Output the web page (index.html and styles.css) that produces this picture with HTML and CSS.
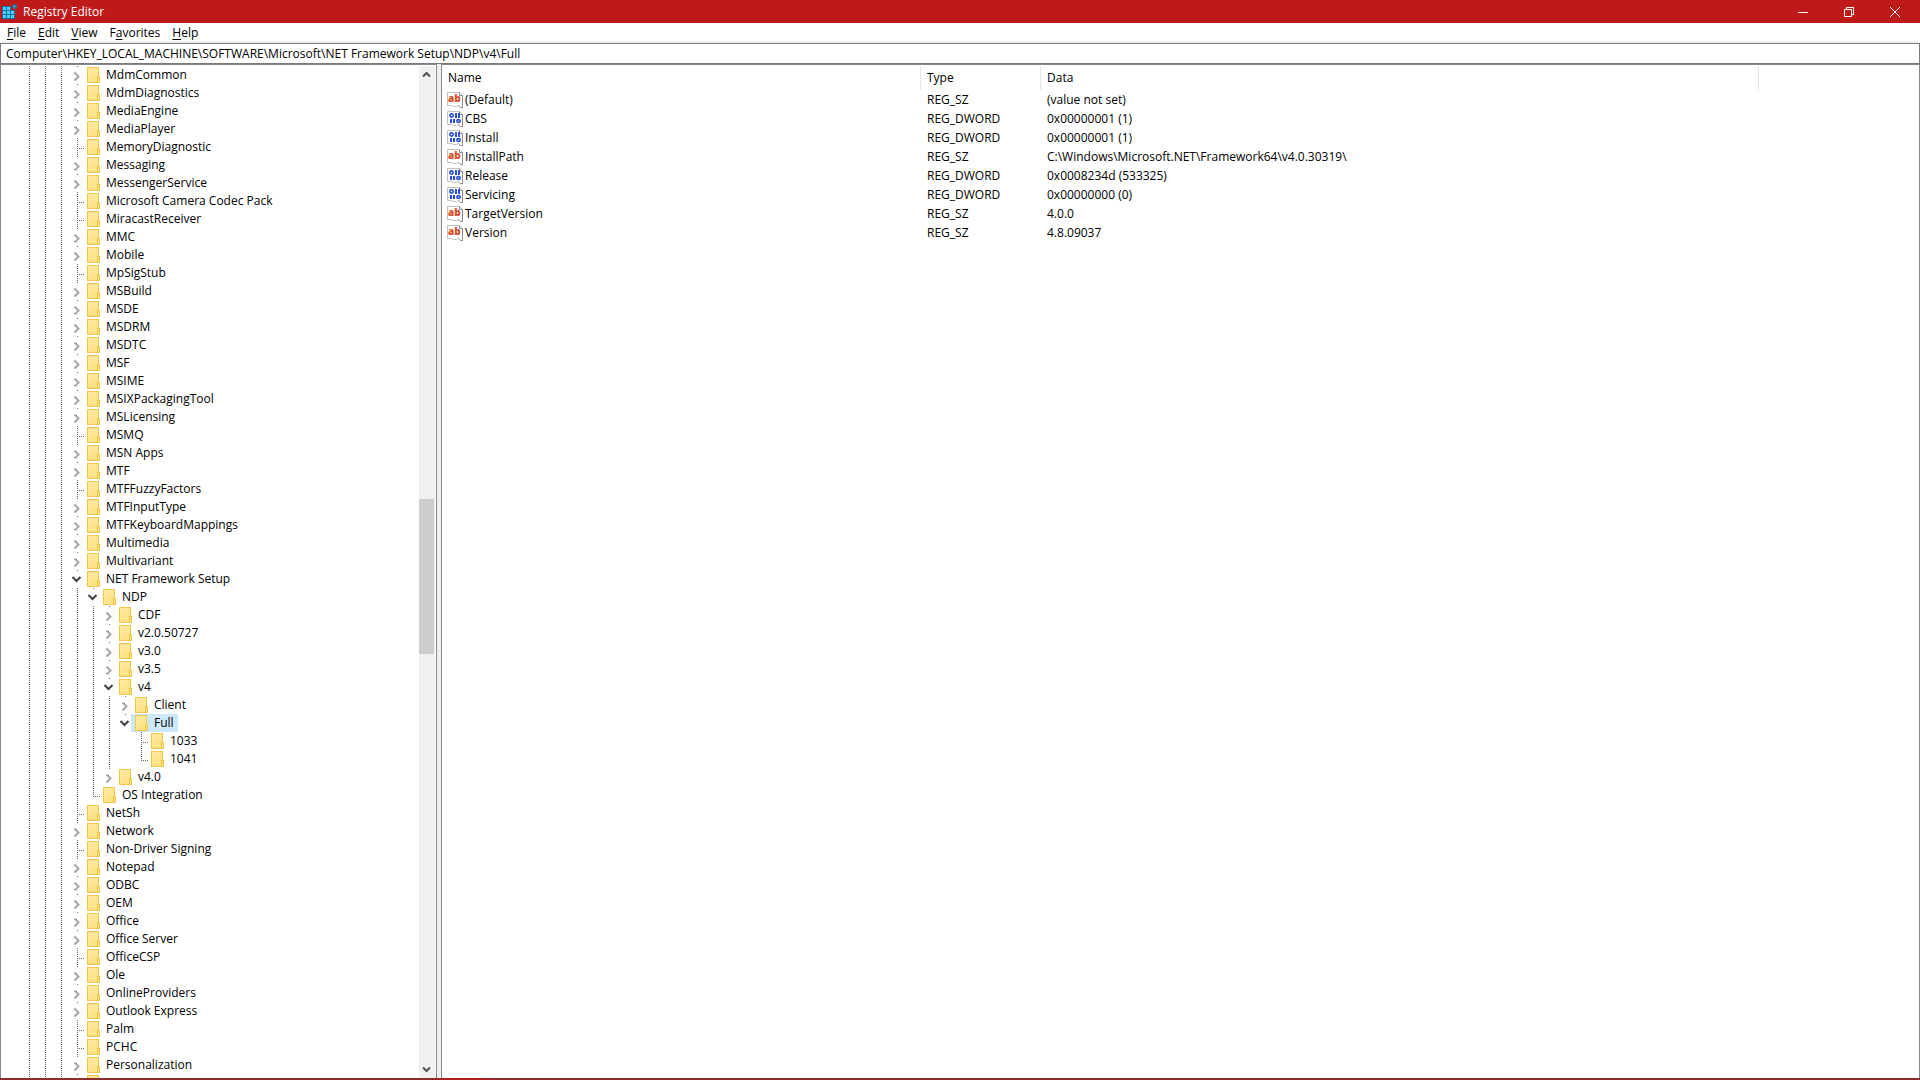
FILE: index.html
```
<!DOCTYPE html>
<html lang="en">

<head>
    <meta charset="utf-8">
    <title>Registry Editor</title>
    <link rel="stylesheet" href="styles.css">
</head>

<body>
<svg class="symbols" aria-hidden="true">
    <symbol id="icon-right" viewBox="0 0 16 17">
        <path d="M7.5 5.5 L11.5 9.5 L7.5 13.5" fill="none" stroke="#a6a6a6" stroke-width="2"/>
    </symbol>
    <symbol id="icon-down" viewBox="0 0 16 17">
        <path d="M5.5 6 L9.5 10 L13.5 6" fill="none" stroke="#404040" stroke-width="2"/>
    </symbol>
    <symbol id="icon-string" viewBox="0 0 16 16">
        <path d="M0.5 0.5 H12.5 L15.5 3.5 V15.5 H13.5 L11.5 13.5 L9.5 14.5 H6.5 L4.5 13.5 H0.5 Z" fill="#fff" stroke="#c0c0c0"/>
        <path d="M12.5 0.5 V3.5 H15.5 V15.5 H13.5 L11.5 13.5" fill="none" stroke="#8c8c8c"/>
        <text x="1" y="10" class="glyph">ab</text>
    </symbol>
    <symbol id="icon-binary" viewBox="0 0 16 16">
        <path d="M0.5 0.5 H12.5 L15.5 3.5 V15.5 H13.5 L11.5 13.5 L9.5 14.5 H6.5 L4.5 13.5 H0.5 Z" fill="#fff" stroke="#c0c0c0"/>
        <path d="M12.5 0.5 V3.5 H15.5 V15.5 H13.5 L11.5 13.5" fill="none" stroke="#8c8c8c"/>
        <path d="M9 2 V7 M12 2 V7 M4 8 V12 M7 8 V12" fill="none" stroke="#2a50d8" stroke-width="2"/>
        <ellipse cx="4.5" cy="4.5" rx="1.7" ry="1.6" fill="none" stroke="#2a50d8" stroke-width="1.6"/>
        <ellipse cx="11.5" cy="10" rx="1.7" ry="1.4" fill="none" stroke="#2a50d8" stroke-width="1.6"/>
    </symbol>
</svg>

<div class="window">
    <header class="title-bar">
        <svg class="app-icon" width="16" height="16" viewBox="0 0 16 16">
            <path d="M0 2 H9 V6 H13 V15 H0 Z" fill="#0a6fb0"/>
            <path d="M1 3 H4 V6 H1 Z M5 3 H8 V6 H5 Z M1 7 H4 V10 H1 Z M5 7 H8 V10 H5 Z M9 7 H12 V10 H9 Z M1 11 H4 V14 H1 Z M5 11 H8 V14 H5 Z M9 11 H12 V14 H9 Z" fill="#4fd0fa"/>
            <path d="M12.5 0 V5 M10 2.5 H15" stroke="#1583c4" stroke-width="2"/>
            <path d="M12 2 H13 V3 H12 Z" fill="#4fd0fa"/>
        </svg>
        <h1>Registry Editor</h1>
        <div class="window-buttons">
            <button type="button" aria-label="Minimize">
                <svg width="10" height="10" viewBox="0 0 10 10"><path d="M0 5.5 H10" stroke="#fff"/></svg>
            </button>
            <button type="button" aria-label="Restore">
                <svg width="10" height="10" viewBox="0 0 10 10"><path d="M0.5 2.5 H7.5 V9.5 H0.5 Z M2.5 2.5 V0.5 H9.5 V7.5 H7.5" fill="none" stroke="#fff"/></svg>
            </button>
            <button type="button" aria-label="Close">
                <svg width="10" height="10" viewBox="0 0 10 10"><path d="M0 0 L10 10 M10 0 L0 10" stroke="#fff"/></svg>
            </button>
        </div>
    </header>

    <nav class="menu-bar">
        <button type="button"><u>F</u>ile</button>
        <button type="button"><u>E</u>dit</button>
        <button type="button"><u>V</u>iew</button>
        <button type="button">F<u>a</u>vorites</button>
        <button type="button"><u>H</u>elp</button>
    </nav>

    <input class="address" type="text" aria-label="Address" value="Computer\HKEY_LOCAL_MACHINE\SOFTWARE\Microsoft\NET Framework Setup\NDP\v4\Full">

    <main class="panes">
        <section class="tree-pane">
            <div class="tree">
                <ul>
                    <li><div class="row"><button type="button" class="toggle" aria-label="Expand"><svg><use href="#icon-right"/></svg></button><span class="key">MdmCommon</span></div></li>
                    <li><div class="row"><button type="button" class="toggle" aria-label="Expand"><svg><use href="#icon-right"/></svg></button><span class="key">MdmDiagnostics</span></div></li>
                    <li><div class="row"><button type="button" class="toggle" aria-label="Expand"><svg><use href="#icon-right"/></svg></button><span class="key">MediaEngine</span></div></li>
                    <li><div class="row"><button type="button" class="toggle" aria-label="Expand"><svg><use href="#icon-right"/></svg></button><span class="key">MediaPlayer</span></div></li>
                    <li><div class="row leaf"><span class="key">MemoryDiagnostic</span></div></li>
                    <li><div class="row"><button type="button" class="toggle" aria-label="Expand"><svg><use href="#icon-right"/></svg></button><span class="key">Messaging</span></div></li>
                    <li><div class="row"><button type="button" class="toggle" aria-label="Expand"><svg><use href="#icon-right"/></svg></button><span class="key">MessengerService</span></div></li>
                    <li><div class="row leaf"><span class="key">Microsoft Camera Codec Pack</span></div></li>
                    <li><div class="row leaf"><span class="key">MiracastReceiver</span></div></li>
                    <li><div class="row"><button type="button" class="toggle" aria-label="Expand"><svg><use href="#icon-right"/></svg></button><span class="key">MMC</span></div></li>
                    <li><div class="row"><button type="button" class="toggle" aria-label="Expand"><svg><use href="#icon-right"/></svg></button><span class="key">Mobile</span></div></li>
                    <li><div class="row leaf"><span class="key">MpSigStub</span></div></li>
                    <li><div class="row"><button type="button" class="toggle" aria-label="Expand"><svg><use href="#icon-right"/></svg></button><span class="key">MSBuild</span></div></li>
                    <li><div class="row"><button type="button" class="toggle" aria-label="Expand"><svg><use href="#icon-right"/></svg></button><span class="key">MSDE</span></div></li>
                    <li><div class="row"><button type="button" class="toggle" aria-label="Expand"><svg><use href="#icon-right"/></svg></button><span class="key">MSDRM</span></div></li>
                    <li><div class="row"><button type="button" class="toggle" aria-label="Expand"><svg><use href="#icon-right"/></svg></button><span class="key">MSDTC</span></div></li>
                    <li><div class="row"><button type="button" class="toggle" aria-label="Expand"><svg><use href="#icon-right"/></svg></button><span class="key">MSF</span></div></li>
                    <li><div class="row"><button type="button" class="toggle" aria-label="Expand"><svg><use href="#icon-right"/></svg></button><span class="key">MSIME</span></div></li>
                    <li><div class="row"><button type="button" class="toggle" aria-label="Expand"><svg><use href="#icon-right"/></svg></button><span class="key">MSIXPackagingTool</span></div></li>
                    <li><div class="row"><button type="button" class="toggle" aria-label="Expand"><svg><use href="#icon-right"/></svg></button><span class="key">MSLicensing</span></div></li>
                    <li><div class="row leaf"><span class="key">MSMQ</span></div></li>
                    <li><div class="row"><button type="button" class="toggle" aria-label="Expand"><svg><use href="#icon-right"/></svg></button><span class="key">MSN Apps</span></div></li>
                    <li><div class="row"><button type="button" class="toggle" aria-label="Expand"><svg><use href="#icon-right"/></svg></button><span class="key">MTF</span></div></li>
                    <li><div class="row leaf"><span class="key">MTFFuzzyFactors</span></div></li>
                    <li><div class="row"><button type="button" class="toggle" aria-label="Expand"><svg><use href="#icon-right"/></svg></button><span class="key">MTFInputType</span></div></li>
                    <li><div class="row"><button type="button" class="toggle" aria-label="Expand"><svg><use href="#icon-right"/></svg></button><span class="key">MTFKeyboardMappings</span></div></li>
                    <li><div class="row"><button type="button" class="toggle" aria-label="Expand"><svg><use href="#icon-right"/></svg></button><span class="key">Multimedia</span></div></li>
                    <li><div class="row"><button type="button" class="toggle" aria-label="Expand"><svg><use href="#icon-right"/></svg></button><span class="key">Multivariant</span></div></li>
                    <li>
                        <div class="row"><button type="button" class="toggle" aria-label="Collapse"><svg><use href="#icon-down"/></svg></button><span class="key">NET Framework Setup</span></div>
                        <ul>
                            <li>
                                <div class="row"><button type="button" class="toggle" aria-label="Collapse"><svg><use href="#icon-down"/></svg></button><span class="key">NDP</span></div>
                                <ul>
                                    <li><div class="row"><button type="button" class="toggle" aria-label="Expand"><svg><use href="#icon-right"/></svg></button><span class="key">CDF</span></div></li>
                                    <li><div class="row"><button type="button" class="toggle" aria-label="Expand"><svg><use href="#icon-right"/></svg></button><span class="key">v2.0.50727</span></div></li>
                                    <li><div class="row"><button type="button" class="toggle" aria-label="Expand"><svg><use href="#icon-right"/></svg></button><span class="key">v3.0</span></div></li>
                                    <li><div class="row"><button type="button" class="toggle" aria-label="Expand"><svg><use href="#icon-right"/></svg></button><span class="key">v3.5</span></div></li>
                                    <li>
                                        <div class="row"><button type="button" class="toggle" aria-label="Collapse"><svg><use href="#icon-down"/></svg></button><span class="key">v4</span></div>
                                        <ul>
                                            <li><div class="row"><button type="button" class="toggle" aria-label="Expand"><svg><use href="#icon-right"/></svg></button><span class="key">Client</span></div></li>
                                            <li>
                                                <div class="row"><button type="button" class="toggle" aria-label="Collapse"><svg><use href="#icon-down"/></svg></button><span class="key selected">Full</span></div>
                                                <ul>
                                                    <li><div class="row leaf"><span class="key">1033</span></div></li>
                                                    <li><div class="row leaf"><span class="key">1041</span></div></li>
                                                </ul>
                                            </li>
                                        </ul>
                                    </li>
                                    <li><div class="row"><button type="button" class="toggle" aria-label="Expand"><svg><use href="#icon-right"/></svg></button><span class="key">v4.0</span></div></li>
                                </ul>
                            </li>
                            <li><div class="row leaf"><span class="key">OS Integration</span></div></li>
                        </ul>
                    </li>
                    <li><div class="row leaf"><span class="key">NetSh</span></div></li>
                    <li><div class="row"><button type="button" class="toggle" aria-label="Expand"><svg><use href="#icon-right"/></svg></button><span class="key">Network</span></div></li>
                    <li><div class="row leaf"><span class="key">Non-Driver Signing</span></div></li>
                    <li><div class="row"><button type="button" class="toggle" aria-label="Expand"><svg><use href="#icon-right"/></svg></button><span class="key">Notepad</span></div></li>
                    <li><div class="row"><button type="button" class="toggle" aria-label="Expand"><svg><use href="#icon-right"/></svg></button><span class="key">ODBC</span></div></li>
                    <li><div class="row"><button type="button" class="toggle" aria-label="Expand"><svg><use href="#icon-right"/></svg></button><span class="key">OEM</span></div></li>
                    <li><div class="row"><button type="button" class="toggle" aria-label="Expand"><svg><use href="#icon-right"/></svg></button><span class="key">Office</span></div></li>
                    <li><div class="row"><button type="button" class="toggle" aria-label="Expand"><svg><use href="#icon-right"/></svg></button><span class="key">Office Server</span></div></li>
                    <li><div class="row leaf"><span class="key">OfficeCSP</span></div></li>
                    <li><div class="row"><button type="button" class="toggle" aria-label="Expand"><svg><use href="#icon-right"/></svg></button><span class="key">Ole</span></div></li>
                    <li><div class="row"><button type="button" class="toggle" aria-label="Expand"><svg><use href="#icon-right"/></svg></button><span class="key">OnlineProviders</span></div></li>
                    <li><div class="row"><button type="button" class="toggle" aria-label="Expand"><svg><use href="#icon-right"/></svg></button><span class="key">Outlook Express</span></div></li>
                    <li><div class="row leaf"><span class="key">Palm</span></div></li>
                    <li><div class="row leaf"><span class="key">PCHC</span></div></li>
                    <li><div class="row"><button type="button" class="toggle" aria-label="Expand"><svg><use href="#icon-right"/></svg></button><span class="key">Personalization</span></div></li>
                    <li><div class="row"><button type="button" class="toggle" aria-label="Expand"><svg><use href="#icon-right"/></svg></button><span class="key"></span></div></li>
                </ul>
            </div>
            <div class="scrollbar">
                <button type="button" aria-label="Scroll up">
                    <svg width="9" height="7" viewBox="0 0 9 7"><path d="M1 5.5 L4.5 2 L8 5.5" fill="none" stroke="#505050" stroke-width="2"/></svg>
                </button>
                <div class="track"><div class="thumb"></div></div>
                <button type="button" aria-label="Scroll down">
                    <svg width="9" height="7" viewBox="0 0 9 7"><path d="M1 1.5 L4.5 5 L8 1.5" fill="none" stroke="#505050" stroke-width="2"/></svg>
                </button>
            </div>
        </section>

        <section class="value-pane">
            <table>
                <colgroup>
                    <col class="col-name">
                    <col class="col-type">
                    <col class="col-data">
                    <col>
                </colgroup>
                <thead>
                    <tr><th>Name</th><th>Type</th><th>Data</th><td></td></tr>
                </thead>
                <tbody>
                    <tr><td><span class="value"><svg><use href="#icon-string"/></svg>(Default)</span></td><td>REG_SZ</td><td>(value not set)</td></tr>
                    <tr><td><span class="value"><svg><use href="#icon-binary"/></svg>CBS</span></td><td>REG_DWORD</td><td>0x00000001 (1)</td></tr>
                    <tr><td><span class="value"><svg><use href="#icon-binary"/></svg>Install</span></td><td>REG_DWORD</td><td>0x00000001 (1)</td></tr>
                    <tr><td><span class="value"><svg><use href="#icon-string"/></svg>InstallPath</span></td><td>REG_SZ</td><td>C:\Windows\Microsoft.NET\Framework64\v4.0.30319\</td></tr>
                    <tr><td><span class="value"><svg><use href="#icon-binary"/></svg>Release</span></td><td>REG_DWORD</td><td>0x0008234d (533325)</td></tr>
                    <tr><td><span class="value"><svg><use href="#icon-binary"/></svg>Servicing</span></td><td>REG_DWORD</td><td>0x00000000 (0)</td></tr>
                    <tr><td><span class="value"><svg><use href="#icon-string"/></svg>TargetVersion</span></td><td>REG_SZ</td><td>4.0.0</td></tr>
                    <tr><td><span class="value"><svg><use href="#icon-string"/></svg>Version</span></td><td>REG_SZ</td><td>4.8.09037</td></tr>
                </tbody>
            </table>
        </section>
    </main>
    <div class="bottom-edge"></div>
</div>
</body>

</html>
```
FILE: styles.css
```
* {
    box-sizing: border-box;
}

body {
    margin: 0;
    background: #f0f0f0;
    color: #000;
    font-family: "Open Sans", sans-serif;
    font-size: 12px;
    line-height: 18px;
}

button,
input {
    margin: 0;
    padding: 0;
    border: 0;
    background: none;
    color: inherit;
    font: inherit;
}

ul {
    margin: 0;
    padding: 0;
    list-style: none;
}

.symbols {
    display: none;
}

.window {
    display: flex;
    flex-direction: column;
    height: 100vh;
}

.bottom-edge {
    height: 2px;
    background: linear-gradient(to right, #8a2c2c 430px, #b51c1c 450px, #b51c1c 480px, #8a2c2c 495px);
}

/* title bar */
.title-bar {
    display: flex;
    align-items: center;
    height: 23px;
    padding: 0 2px;
    background: #bf1a1a;
    color: #fff;
}

.title-bar h1 {
    flex: 1;
    margin: 0 0 0 5px;
    font-size: 12px;
    font-weight: normal;
}

.window-buttons {
    display: flex;
}

.window-buttons button {
    display: flex;
    align-items: center;
    justify-content: center;
    width: 46px;
    height: 20px;
}

/* menu and address */
.menu-bar {
    display: flex;
    height: 18px;
    padding-left: 1px;
    background: #fff;
}

.menu-bar button {
    padding: 0 6px;
    line-height: 20px;
}

.menu-bar u {
    text-underline-offset: 2px;
}

.address {
    width: 100%;
    height: 21px;
    margin-top: 2px;
    padding: 0 5px;
    border: 1px solid #7a7a7a;
    background: #fff;
}

/* panes */
.panes {
    display: flex;
    flex: 1;
    gap: 4px;
    min-height: 0;
}

.tree-pane {
    display: flex;
    width: 437px;
    border: 1px solid #828790;
    border-bottom: 0;
    background: #fff;
}

.tree {
    --dot: #666;
    --dots: linear-gradient(var(--dot) 50%, transparent 50%);
    flex: 1;
    overflow: hidden;
    margin-top: 1px;
    padding-left: 66px;
    background: var(--dots) 28px 0 / 1px 2px repeat-y,
        var(--dots) 44px 0 / 1px 2px repeat-y,
        var(--dots) 60px 0 / 1px 2px repeat-y;
}

.tree li {
    background: var(--dots) 10px 0 / 1px 2px repeat-y;
}

.tree ul ul {
    padding-left: 16px;
}

/* the guide of a last child stops at its own row */
.tree ul ul > li:last-child {
    background: repeating-linear-gradient(var(--dot) 0 1px, transparent 1px 2px) 10px 0 / 1px 11px no-repeat;
}

.row {
    display: flex;
    height: 18px;
    white-space: nowrap;
}

.toggle {
    width: 16px;
    height: 17px;
    margin-top: 1px;
    background: #fff;
}

.toggle svg {
    display: block;
    width: 16px;
    height: 17px;
}

.leaf {
    padding-left: 16px;
    background: repeating-linear-gradient(to right, var(--dot) 0 1px, transparent 1px 2px) 12px 10px / 5px 1px no-repeat;
}

.key {
    display: flex;
    gap: 6px;
    padding: 0 4px;
}

/* folder icon */
.key::before {
    content: "";
    width: 13px;
    height: 16px;
    margin-top: 1px;
    background: linear-gradient(#edc84a, #edc84a) 10px 9px / 1px 7px no-repeat,
        linear-gradient(#edc84a, #edc84a) 12px 9px / 1px 7px no-repeat,
        linear-gradient(#edc84a, #edc84a) 10px 9px / 3px 1px no-repeat,
        linear-gradient(#edc84a, #edc84a) 0 0 / 1px 16px no-repeat,
        linear-gradient(#edc84a, #edc84a) 0 0 / 12px 1px no-repeat,
        linear-gradient(#edc84a, #edc84a) 0 15px / 13px 1px no-repeat,
        linear-gradient(#edc84a, #edc84a) 11px 0 / 1px 9px no-repeat,
        linear-gradient(135deg, #ffeba6, #ffdf7a) 0 0 / 12px 16px no-repeat;
}

.selected {
    background: #cce8ff;
}

/* scrollbar */
.scrollbar {
    display: flex;
    flex-direction: column;
    width: 17px;
    margin-top: 1px;
    border-right: 1px solid #fff;
    background: #f0f0f0;
}

.scrollbar button {
    display: flex;
    align-items: center;
    justify-content: center;
    width: 15px;
    height: 17px;
}

.track {
    flex: 1;
    padding-top: 416px;
}

.thumb {
    width: 15px;
    height: 155px;
    background: #cdcdcd;
}

/* value list */
.value-pane {
    flex: 1;
    border: 1px solid #828790;
    border-bottom: 0;
    background: #fff;
}

table {
    width: 100%;
    margin-top: 1px;
    border-spacing: 0;
    table-layout: fixed;
}

.col-name {
    width: 479px;
}

.col-type {
    width: 120px;
}

.col-data {
    width: 718px;
}

th {
    height: 24px;
    padding: 0 6px;
    border-right: 1px solid #e5e5e5;
    font-weight: normal;
    text-align: left;
}

tbody td {
    height: 19px;
    padding: 0 6px;
    white-space: nowrap;
}

tbody td:first-child {
    padding-left: 5px;
}

.value {
    display: flex;
    align-items: center;
    gap: 2px;
}

.value svg {
    width: 16px;
    height: 16px;
}

.glyph {
    fill: #d9502b;
    font-family: "Open Sans", sans-serif;
    font-size: 10px;
    font-weight: 800;
}
```
